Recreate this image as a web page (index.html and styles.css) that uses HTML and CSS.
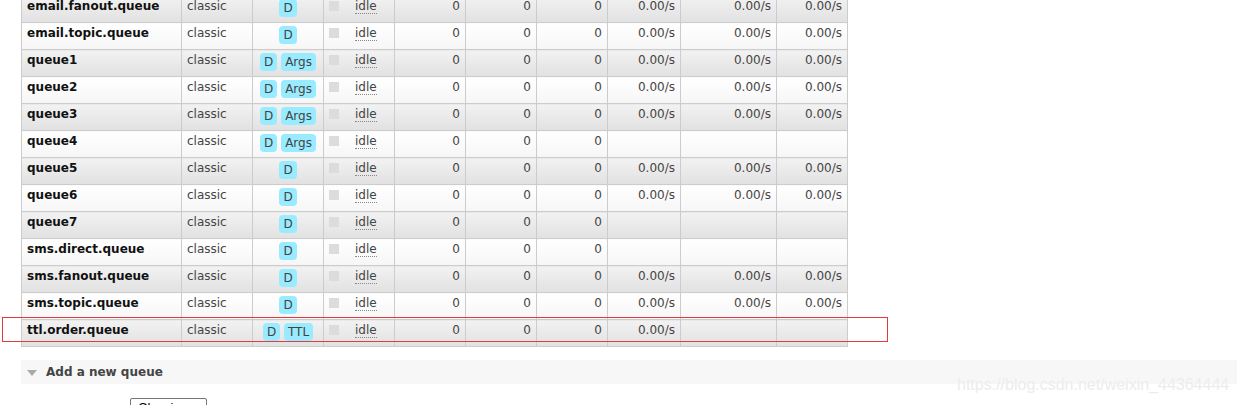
FILE: index.html
```html
<!DOCTYPE html>
<html>
<head>
<meta charset="utf-8">
<link rel="stylesheet" href="styles.css">
</head>
<body>
<div class="page">
  <table class="list">
    <colgroup>
      <col class="c-name"><col class="c-type"><col class="c-feat"><col class="c-state">
      <col class="c-num"><col class="c-num"><col class="c-num">
      <col class="c-rate1"><col class="c-rate2"><col class="c-rate3">
    </colgroup>
    <tbody>
      <tr class="alt1"><td class="name">email.fanout.queue</td><td>classic</td><td class="feat"><abbr class="tag">D</abbr></td><td class="state"><span class="sq"></span><abbr class="idle">idle</abbr></td><td class="r">0</td><td class="r">0</td><td class="r">0</td><td class="r">0.00/s</td><td class="r">0.00/s</td><td class="r">0.00/s</td></tr>
      <tr class="alt2"><td class="name">email.topic.queue</td><td>classic</td><td class="feat"><abbr class="tag">D</abbr></td><td class="state"><span class="sq"></span><abbr class="idle">idle</abbr></td><td class="r">0</td><td class="r">0</td><td class="r">0</td><td class="r">0.00/s</td><td class="r">0.00/s</td><td class="r">0.00/s</td></tr>
      <tr class="alt1"><td class="name">queue1</td><td>classic</td><td class="feat"><abbr class="tag">D</abbr> <abbr class="tag">Args</abbr></td><td class="state"><span class="sq"></span><abbr class="idle">idle</abbr></td><td class="r">0</td><td class="r">0</td><td class="r">0</td><td class="r">0.00/s</td><td class="r">0.00/s</td><td class="r">0.00/s</td></tr>
      <tr class="alt2"><td class="name">queue2</td><td>classic</td><td class="feat"><abbr class="tag">D</abbr> <abbr class="tag">Args</abbr></td><td class="state"><span class="sq"></span><abbr class="idle">idle</abbr></td><td class="r">0</td><td class="r">0</td><td class="r">0</td><td class="r">0.00/s</td><td class="r">0.00/s</td><td class="r">0.00/s</td></tr>
      <tr class="alt1"><td class="name">queue3</td><td>classic</td><td class="feat"><abbr class="tag">D</abbr> <abbr class="tag">Args</abbr></td><td class="state"><span class="sq"></span><abbr class="idle">idle</abbr></td><td class="r">0</td><td class="r">0</td><td class="r">0</td><td class="r">0.00/s</td><td class="r">0.00/s</td><td class="r">0.00/s</td></tr>
      <tr class="alt2"><td class="name">queue4</td><td>classic</td><td class="feat"><abbr class="tag">D</abbr> <abbr class="tag">Args</abbr></td><td class="state"><span class="sq"></span><abbr class="idle">idle</abbr></td><td class="r">0</td><td class="r">0</td><td class="r">0</td><td class="r"></td><td class="r"></td><td class="r"></td></tr>
      <tr class="alt1"><td class="name">queue5</td><td>classic</td><td class="feat"><abbr class="tag">D</abbr></td><td class="state"><span class="sq"></span><abbr class="idle">idle</abbr></td><td class="r">0</td><td class="r">0</td><td class="r">0</td><td class="r">0.00/s</td><td class="r">0.00/s</td><td class="r">0.00/s</td></tr>
      <tr class="alt2"><td class="name">queue6</td><td>classic</td><td class="feat"><abbr class="tag">D</abbr></td><td class="state"><span class="sq"></span><abbr class="idle">idle</abbr></td><td class="r">0</td><td class="r">0</td><td class="r">0</td><td class="r">0.00/s</td><td class="r">0.00/s</td><td class="r">0.00/s</td></tr>
      <tr class="alt1"><td class="name">queue7</td><td>classic</td><td class="feat"><abbr class="tag">D</abbr></td><td class="state"><span class="sq"></span><abbr class="idle">idle</abbr></td><td class="r">0</td><td class="r">0</td><td class="r">0</td><td class="r"></td><td class="r"></td><td class="r"></td></tr>
      <tr class="alt2"><td class="name">sms.direct.queue</td><td>classic</td><td class="feat"><abbr class="tag">D</abbr></td><td class="state"><span class="sq"></span><abbr class="idle">idle</abbr></td><td class="r">0</td><td class="r">0</td><td class="r">0</td><td class="r"></td><td class="r"></td><td class="r"></td></tr>
      <tr class="alt1"><td class="name">sms.fanout.queue</td><td>classic</td><td class="feat"><abbr class="tag">D</abbr></td><td class="state"><span class="sq"></span><abbr class="idle">idle</abbr></td><td class="r">0</td><td class="r">0</td><td class="r">0</td><td class="r">0.00/s</td><td class="r">0.00/s</td><td class="r">0.00/s</td></tr>
      <tr class="alt2"><td class="name">sms.topic.queue</td><td>classic</td><td class="feat"><abbr class="tag">D</abbr></td><td class="state"><span class="sq"></span><abbr class="idle">idle</abbr></td><td class="r">0</td><td class="r">0</td><td class="r">0</td><td class="r">0.00/s</td><td class="r">0.00/s</td><td class="r">0.00/s</td></tr>
      <tr class="alt1"><td class="name">ttl.order.queue</td><td>classic</td><td class="feat"><abbr class="tag">D</abbr> <abbr class="tag">TTL</abbr></td><td class="state"><span class="sq"></span><abbr class="idle">idle</abbr></td><td class="r">0</td><td class="r">0</td><td class="r">0</td><td class="r">0.00/s</td><td class="r"></td><td class="r"></td></tr>
    </tbody>
  </table>

  <div class="section">
    <span class="tri"></span>
    <span class="section-title">Add a new queue</span>
  </div>

  <div class="form-row">
    <div class="select">Classic</div>
  </div>
</div>

<div class="highlight"></div>
<div class="watermark">https://blog.csdn.net/weixin_44364444</div>
</body>
</html>
```

FILE: styles.css
```css
html, body {
  margin: 0;
  padding: 0;
  background: #fff;
  overflow: hidden;
}
body {
  font-family: "DejaVu Sans", Verdana, sans-serif;
  font-size: 12px;
  color: #444;
  width: 1237px;
  height: 405px;
  position: relative;
}
.page {
  padding-left: 21px;
  margin-top: -5px;
}
table.list {
  border-collapse: collapse;
  table-layout: fixed;
  width: 827px;
}
col.c-name { width: 160px; }
col.c-type, col.c-feat, col.c-state, col.c-num { width: 71px; }
col.c-rate1 { width: 73px; }
col.c-rate2 { width: 96px; }
col.c-rate3 { width: 71px; }

table.list td {
  border: 1px solid #ccc;
  padding: 3px 5px 0 5px;
  height: 23px;
  line-height: 14px;
  vertical-align: top;
  white-space: nowrap;
  overflow: hidden;
}
tr.alt1 td { background: linear-gradient(#f2f2f2, #e1e1e1); }
tr.alt2 td { background: linear-gradient(#ffffff, #f6f6f6); }

td.name {
  font-weight: bold;
  color: #111;
}
td.r { text-align: right; }
td.feat {
  text-align: center;
  padding-left: 2px;
  padding-right: 2px;
  padding-top: 2px;
  height: 24px;
}
abbr.tag {
  display: inline-block;
  vertical-align: top;
  background: #99ebff;
  color: #444;
  border-radius: 4px;
  padding: 2px 4px;
  line-height: 14px;
  text-decoration: none;
}
td.state { padding-left: 6px; }
.sq {
  display: inline-block;
  width: 10px;
  height: 10px;
  background: #dcdcdc;
  vertical-align: top;
  margin-top: 2px;
  margin-right: 16px;
}
abbr.idle {
  text-decoration: none;
  border-bottom: 1px dotted #888;
  color: #444;
}

.section {
  margin-top: 13px;
  height: 24px;
  background: #f7f7f7;
  display: flex;
  align-items: center;
  padding-left: 6px;
}
.tri {
  width: 0;
  height: 0;
  border-left: 5px solid transparent;
  border-right: 5px solid transparent;
  border-top: 6px solid #aaa;
  margin-right: 9px;
  margin-top: 1px;
}
.section-title {
  font-weight: bold;
  color: #444;
  font-size: 12px;
}

.form-row {
  margin-top: 14px;
  padding-left: 109px;
}
.select {
  width: 68px;
  height: 20px;
  border: 1px solid #767676;
  border-radius: 2px;
  padding-left: 7px;
  line-height: 18px;
  color: #000;
  font-family: "Liberation Sans", Arial, sans-serif;
  font-size: 13px;
}

.highlight {
  position: absolute;
  left: 2px;
  top: 317px;
  width: 884px;
  height: 23px;
  border: 1px solid #e23b3b;
}
.watermark {
  position: absolute;
  left: 957px;
  top: 376px;
  font-family: "Liberation Sans", Arial, sans-serif;
  font-size: 16px;
  color: #ececec;
  white-space: nowrap;
  text-shadow: 0 0 1px #fff;
}
```
